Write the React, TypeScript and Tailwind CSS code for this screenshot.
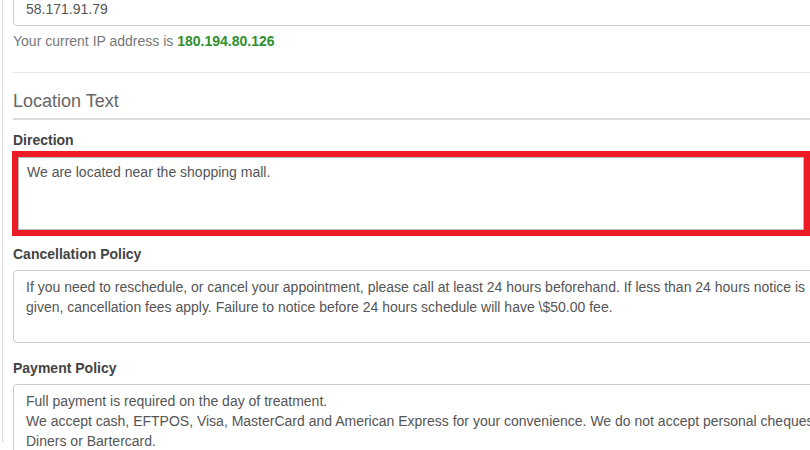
import React from "react";

const cancellation =
  "If you need to reschedule, or cancel your appointment, please call at least 24 hours beforehand. If less than 24 hours notice is given, cancellation fees apply. Failure to notice before 24 hours schedule will have \\$50.00 fee.";

const payment =
  "Full payment is required on the day of treatment.\nWe accept cash, EFTPOS, Visa, MasterCard and American Express for your convenience. We do not accept personal cheques, Diners or Bartercard.";

const fieldCls =
  "block w-full h-[73px] resize-none overflow-hidden rounded-[4px] border border-[#ccc] bg-white px-[12px] py-[6px] text-[14px] leading-[20px] text-[#555] outline-none";

const Label = ({ children, className = "" }: { children: React.ReactNode; className?: string }) => (
  <label className={`block text-[14px] font-bold leading-[20px] text-[#444] ${className}`}>{children}</label>
);

export default function App() {
  return (
    <div
      className="w-[810px] h-[450px] overflow-hidden bg-white text-[14px] leading-[20px] text-[#555]"
      style={{ fontFamily: '"Liberation Sans", Arial, sans-serif' }}
    >
      <div className="ml-[2px] h-full border-l border-[#ddd] pl-[10px]">
        <div className="w-[840px]">
          <input
            readOnly
            defaultValue="58.171.91.79"
            className="-mt-[8px] block h-[34px] w-full rounded-[4px] border border-[#ccc] px-[12px] py-[6px] text-[14px] leading-[20px] text-[#555] outline-none"
          />
          <p className="mt-[5px] text-[#777]">
            Your current IP address is <b className="text-[#2f8f2f]">180.194.80.126</b>
          </p>

          <hr className="mt-[21px] border-t border-[#e5e5e5]" />

          <h3 className="mt-[15px] border-b-2 border-[#ddd] pb-[4px] text-[18px] leading-[26px] text-[#666]">
            Location Text
          </h3>

          <Label className="mt-[10px]">Direction</Label>
          <div className="-ml-[1px] mt-[1px] w-[798px] border-[6px] border-[#ed1c24]">
            <textarea
              readOnly
              defaultValue="We are located near the shopping mall."
              className="block h-[73px] w-full resize-none overflow-hidden border border-[#bbb] bg-white px-[8px] pt-[4px] text-[14px] leading-[20px] text-[#555] outline-none"
            />
          </div>

          <Label className="mt-[8px]">Cancellation Policy</Label>
          <textarea readOnly defaultValue={cancellation} className={`${fieldCls} mt-[6px]`} />

          <Label className="mt-[15px]">Payment Policy</Label>
          <textarea readOnly defaultValue={payment} className={`${fieldCls} mt-[6px]`} />
        </div>
      </div>
    </div>
  );
}
